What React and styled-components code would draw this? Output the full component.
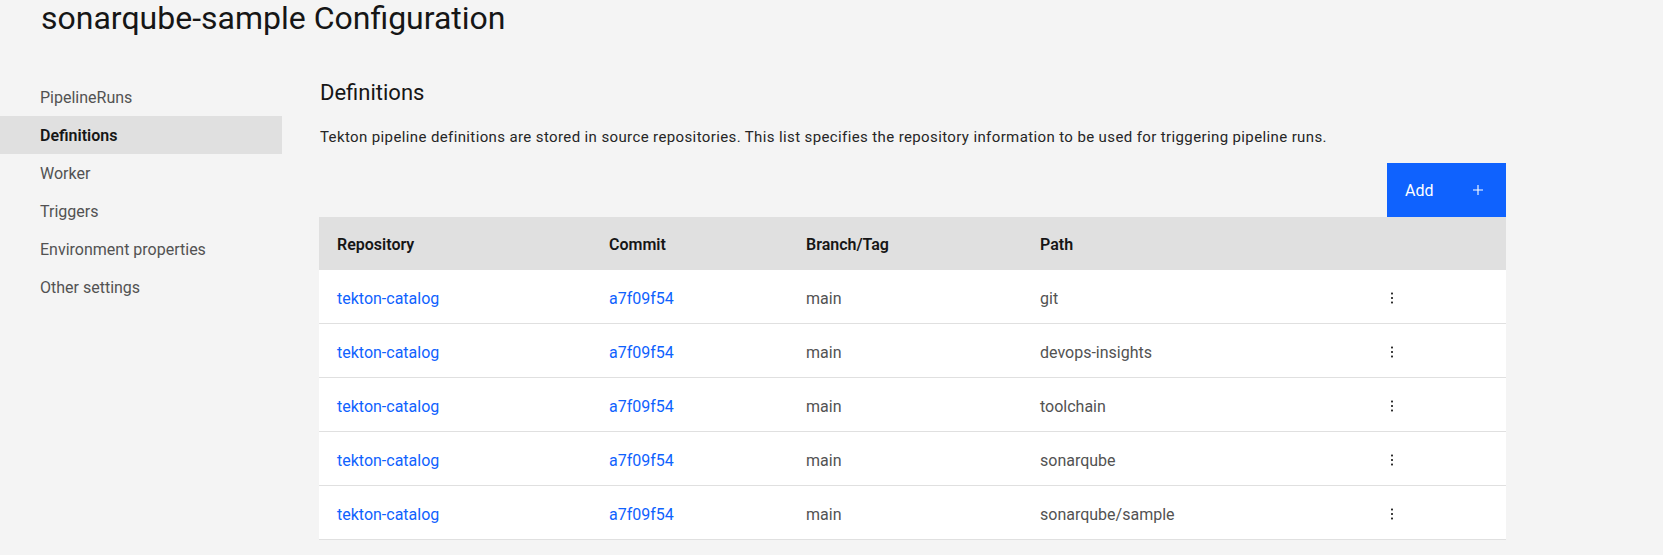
import React from 'react';
import styled, { createGlobalStyle } from 'styled-components';

const GlobalStyle = createGlobalStyle`
  html, body {
    margin: 0;
    padding: 0;
    background: #f4f4f4;
  }
  body {
    font-family: Roboto, "Noto Sans", Arial, sans-serif;
    color: #161616;
  }
  * { box-sizing: border-box; }
`;

const navItems = [
  'PipelineRuns',
  'Definitions',
  'Worker',
  'Triggers',
  'Environment properties',
  'Other settings',
];

const definitions = [
  { repo: 'tekton-catalog', commit: 'a7f09f54', branch: 'main', path: 'git' },
  { repo: 'tekton-catalog', commit: 'a7f09f54', branch: 'main', path: 'devops-insights' },
  { repo: 'tekton-catalog', commit: 'a7f09f54', branch: 'main', path: 'toolchain' },
  { repo: 'tekton-catalog', commit: 'a7f09f54', branch: 'main', path: 'sonarqube' },
  { repo: 'tekton-catalog', commit: 'a7f09f54', branch: 'main', path: 'sonarqube/sample' },
];

const App = () => (
  <Page>
    <GlobalStyle />
    <Title>sonarqube-sample Configuration</Title>
    <Layout>
      <SideNav>
        {navItems.map((item) => (
          <NavItem key={item} active={item === 'Definitions'}>
            {item}
          </NavItem>
        ))}
      </SideNav>

      <Main>
        <Heading>Definitions</Heading>
        <Description>
          Tekton pipeline definitions are stored in source repositories. This list specifies the
          repository information to be used for triggering pipeline runs.
        </Description>

        <Toolbar>
          <AddButton>
            <span>Add</span>
            <svg width="10" height="10" viewBox="0 0 10 10">
              <path d="M5 0v10M0 5h10" stroke="#ffffff" strokeWidth="1.1" />
            </svg>
          </AddButton>
        </Toolbar>

        <Table>
          <HeaderRow>
            <HeadCell>Repository</HeadCell>
            <HeadCell>Commit</HeadCell>
            <HeadCell>Branch/Tag</HeadCell>
            <HeadCell>Path</HeadCell>
            <HeadCell />
          </HeaderRow>
          {definitions.map((d) => (
            <Row key={d.path}>
              <Cell><Link>{d.repo}</Link></Cell>
              <Cell><Link>{d.commit}</Link></Cell>
              <Cell>{d.branch}</Cell>
              <Cell>{d.path}</Cell>
              <Cell>
                <OverflowIcon viewBox="0 0 16 16">
                  <rect x="7.1" y="2.6" width="1.8" height="1.8" />
                  <rect x="7.1" y="7.1" width="1.8" height="1.8" />
                  <rect x="7.1" y="11.6" width="1.8" height="1.8" />
                </OverflowIcon>
              </Cell>
            </Row>
          ))}
        </Table>
      </Main>
    </Layout>
  </Page>
);

const Page = styled.div`
  min-height: 555px;
  background: #f4f4f4;
`;

const Title = styled.h1`
  margin: 0;
  padding-left: 41px;
  font-size: 32px;
  line-height: 36px;
  font-weight: 400;
  color: #161616;
`;

const Layout = styled.div`
  display: grid;
  grid-template-columns: 282px 1187px;
  column-gap: 37px;
  margin-top: 42px;
`;

const SideNav = styled.nav`
  display: flex;
  flex-direction: column;
`;

const NavItem = styled.div`
  height: 38px;
  display: flex;
  align-items: center;
  padding-left: 40px;
  font-size: 16px;
  color: ${(props) => (props.active ? '#161616' : '#525252')};
  font-weight: ${(props) => (props.active ? 600 : 400)};
  background: ${(props) => (props.active ? '#e0e0e0' : 'transparent')};
`;

const Main = styled.main`
  display: flex;
  flex-direction: column;
`;

const Heading = styled.h2`
  margin: 1px 0 0 1px;
  font-size: 22px;
  line-height: 28px;
  font-weight: 400;
  color: #161616;
`;

const Description = styled.p`
  margin: 20px 0 0 1px;
  font-size: 15px;
  line-height: 20px;
  letter-spacing: 0.38px;
  color: #262626;
`;

const Toolbar = styled.div`
  display: flex;
  justify-content: flex-end;
  margin-top: 16px;
`;

const AddButton = styled.button`
  width: 119px;
  height: 54px;
  display: flex;
  align-items: center;
  justify-content: space-between;
  padding: 0 23px 0 18px;
  border: none;
  background: #0f62fe;
  color: #ffffff;
  font-family: inherit;
  font-size: 16px;
  cursor: pointer;
`;

const Table = styled.div`
  display: flex;
  flex-direction: column;
`;

const columns = '272px 197px 234px 344px 1fr';

const HeaderRow = styled.div`
  display: grid;
  grid-template-columns: ${columns};
  height: 53px;
  background: #e0e0e0;
`;

const HeadCell = styled.div`
  display: flex;
  align-items: center;
  padding: 2px 0 0 18px;
  font-size: 16px;
  font-weight: 600;
  color: #161616;
`;

const Row = styled.div`
  display: grid;
  grid-template-columns: ${columns};
  height: 54px;
  background: #ffffff;
  border-bottom: 1px solid #e0e0e0;
`;

const Cell = styled.div`
  display: flex;
  align-items: center;
  padding: 3px 0 0 18px;
  font-size: 16px;
  color: #525252;
`;

const Link = styled.span`
  color: #0f62fe;
`;

const OverflowIcon = styled.svg`
  width: 16px;
  height: 16px;
  fill: #161616;
`;

export default App;
